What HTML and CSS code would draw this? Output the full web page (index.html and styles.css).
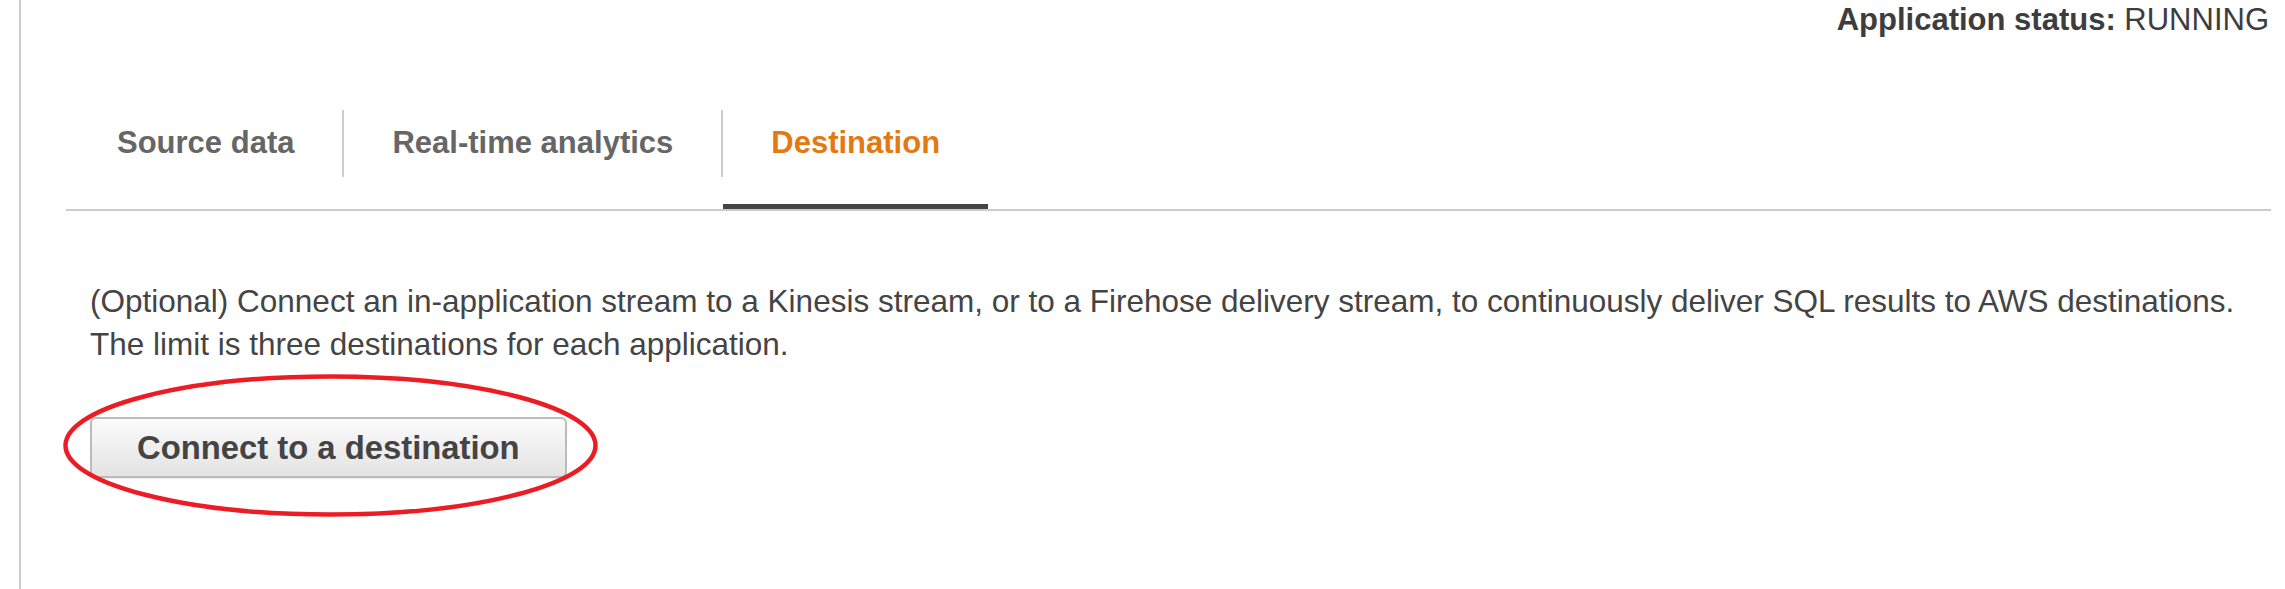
FILE: index.html
```html
<!DOCTYPE html>
<html lang="en">
<head>
<meta charset="utf-8">
<title>Destination</title>
<link rel="stylesheet" href="styles.css">
</head>
<body>
<div class="page">
  <div class="main">
    <div class="status"><b>Application status:</b> RUNNING</div>
    <nav class="tabs">
      <a class="tab">Source data</a>
      <span class="sep"></span>
      <a class="tab">Real-time analytics</a>
      <span class="sep"></span>
      <a class="tab active">Destination</a>
    </nav>
    <div class="content">
      <p class="desc">(Optional) Connect an in-application stream to a Kinesis stream, or to a Firehose delivery stream, to continuously deliver SQL results to AWS destinations.<br>The limit is three destinations for each application.</p>
      <div class="btn-wrap">
        <button class="btn">Connect to a destination</button>
        <svg class="circle" viewBox="0 0 535 143" width="535" height="143" aria-hidden="true">
          <ellipse cx="267.5" cy="71.5" rx="265" ry="69" fill="none" stroke="#ec1c24" stroke-width="4.5"/>
        </svg>
      </div>
    </div>
  </div>
</div>
</body>
</html>
```
FILE: styles.css
```css
html, body {
  margin: 0;
  padding: 0;
  background: #fff;
}
body {
  font-family: "Liberation Sans", Arial, sans-serif;
  color: #444;
}
.page {
  display: flex;
  height: 589px;
  padding-left: 19px;
  box-sizing: border-box;
  overflow: hidden;
}
.main {
  flex: 1;
  border-left: 2px solid #ccc;
  padding-left: 45px;
  padding-right: 14px;
}
.status {
  text-align: right;
  font-size: 31px;
  line-height: 34px;
  padding-top: 3px;
  padding-right: 2px;
  color: #3d3d3d;
}
.status b {
  font-weight: bold;
}
.tabs {
  display: flex;
  align-items: center;
  margin-top: 40px;
  padding-left: 3px;
  border-bottom: 2px solid #ccc;
}
.tab {
  height: 132px;
  display: flex;
  align-items: center;
  padding: 0 48px;
  font-size: 31px;
  font-weight: bold;
  color: #666;
  cursor: pointer;
}
.tab.active {
  color: #e47911;
  box-shadow: inset 0 -5px 0 #444;
}
.sep {
  width: 2px;
  height: 67px;
  background: #ccc;
}
.content {
  padding-left: 24px;
}
.desc {
  margin: 69px 0 0;
  font-size: 31.5px;
  line-height: 43px;
  color: #444;
  white-space: nowrap;
}
.btn-wrap {
  position: relative;
  display: inline-block;
  margin-top: 51px;
}
.btn {
  display: block;
  height: 61px;
  padding: 0 45px;
  font-family: "Liberation Sans", Arial, sans-serif;
  font-size: 32.8px;
  font-weight: bold;
  color: #444;
  background: linear-gradient(#fbfbfb, #e3e3e3);
  border: 2px solid #bbb;
  border-radius: 6px;
  box-shadow: 0 1px 1px rgba(0,0,0,0.08);
}
.circle {
  position: absolute;
  left: -27px;
  top: -43px;
  pointer-events: none;
}
```
